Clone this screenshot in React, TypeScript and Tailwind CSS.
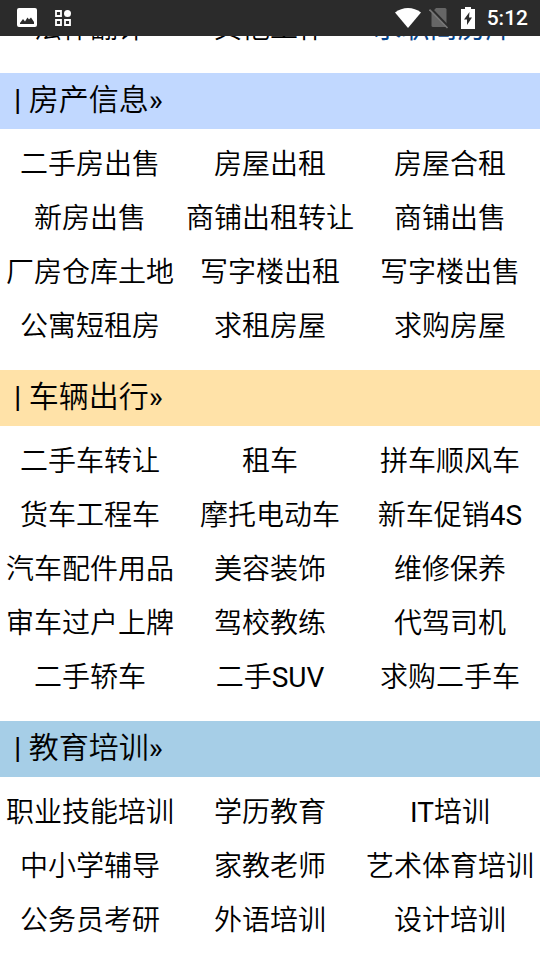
import React from 'react';

interface Category {
  title: string;
  color: string;
  items: string[];
}

const categories: Category[] = [
  {
    title: '房产信息',
    color: 'bg-[#c1d8ff]',
    items: [
      '二手房出售', '房屋出租', '房屋合租',
      '新房出售', '商铺出租转让', '商铺出售',
      '厂房仓库土地', '写字楼出租', '写字楼出售',
      '公寓短租房', '求租房屋', '求购房屋',
    ],
  },
  {
    title: '车辆出行',
    color: 'bg-[#ffe2a8]',
    items: [
      '二手车转让', '租车', '拼车顺风车',
      '货车工程车', '摩托电动车', '新车促销4S',
      '汽车配件用品', '美容装饰', '维修保养',
      '审车过户上牌', '驾校教练', '代驾司机',
      '二手轿车', '二手SUV', '求购二手车',
    ],
  },
  {
    title: '教育培训',
    color: 'bg-[#a6cee7]',
    items: [
      '职业技能培训', '学历教育', 'IT培训',
      '中小学辅导', '家教老师', '艺术体育培训',
      '公务员考研', '外语培训', '设计培训',
    ],
  },
];

const StatusBar: React.FC = () => (
  <header className="fixed inset-x-0 top-0 z-10 flex h-9 items-center justify-between bg-[#2b2b2b] pr-3 pl-4 text-white">
    <div className="flex items-center gap-4">
      {/* Picture notification */}
      <svg className="h-[22px] w-[22px]" viewBox="0 0 22 22" fill="currentColor">
        <path fillRule="evenodd" d="M3 1h16a2 2 0 0 1 2 2v15a2 2 0 0 1-2 2H3a2 2 0 0 1-2-2V3a2 2 0 0 1 2-2zM4 17h14v-2l-3-4.500-2 2-1.500-2-2.500 4-2-2.500-3 4z" />
      </svg>
      {/* App grid notification */}
      <svg className="h-[18px] w-[18px]" viewBox="0 0 18 18" fill="none" stroke="currentColor" strokeWidth="1.800">
        <path d="M2 2h5v5H2zM2 11h5v5H2zM11 11h5v5h-5z" />
        <circle cx="13.500" cy="4.500" r="3.500" fill="currentColor" stroke="none" />
      </svg>
    </div>
    <div className="flex items-center gap-3">
      <div className="flex items-center gap-2">
        <svg className="h-[22px] w-[26px]" viewBox="0 0 26 22" fill="currentColor">
          <path d="M0 5.500C7.500-.5 18.500-.5 26 5.500L13 21z" />
        </svg>
        <svg className="h-[22px] w-[20px]" viewBox="0 0 20 22">
          <path d="M7 1h9a1.500 1.500 0 0 1 1.500 1.500v16A1.500 1.500 0 0 1 16 20H4a1.500 1.500 0 0 1-1.500-1.500V6z" fill="#666" />
          <path d="M1.500 1l18 19" stroke="#2b2b2b" strokeWidth="2.500" />
          <path d="M.5 2.500l18 18.500" stroke="#777" strokeWidth="1.600" />
        </svg>
      </div>
      <svg className="h-[22px] w-[14px]" viewBox="0 0 14 22" fill="currentColor">
        <path fillRule="evenodd" d="M4 0h6v2h4v20H0V2h4zM8.500 5L3 12.500h3V18l5-7.500H8z" />
      </svg>
      <span className="text-[21px] leading-9 font-medium">5:12</span>
    </div>
  </header>
);

const CategorySection: React.FC<{ category: Category }> = ({ category }) => (
  <section>
    <h2 className={`h-14 pl-3.5 text-[30px] leading-[54px] ${category.color}`}>
      <a href="#">| {category.title}»</a>
    </h2>
    <div className="grid grid-cols-3 pt-[9px] pb-4">
      {category.items.map((item) => (
        <a key={item} href="#" className="text-center text-[28px] leading-[54px] whitespace-nowrap">
          {item}
        </a>
      ))}
    </div>
  </section>
);

export default function App() {
  return (
    <div className="h-screen overflow-hidden bg-white font-[Roboto,'Noto_Sans_CJK_SC_DemiLight','Noto_Sans_CJK_SC',sans-serif] text-black">
      <StatusBar />
      <main>
        {/* Last row of the jobs section, scrolled under the status bar */}
        <div className="grid grid-cols-3 pb-[15px] text-center text-[28px] leading-[58px] whitespace-nowrap">
          <a href="#">法律翻译</a>
          <a href="#">其他工作</a>
          <a href="#" className="font-[Roboto,'Noto_Sans_CJK_SC',sans-serif] text-[#044289]">求职简历库»</a>
        </div>
        {categories.map((category) => (
          <CategorySection key={category.title} category={category} />
        ))}
      </main>
    </div>
  );
}
